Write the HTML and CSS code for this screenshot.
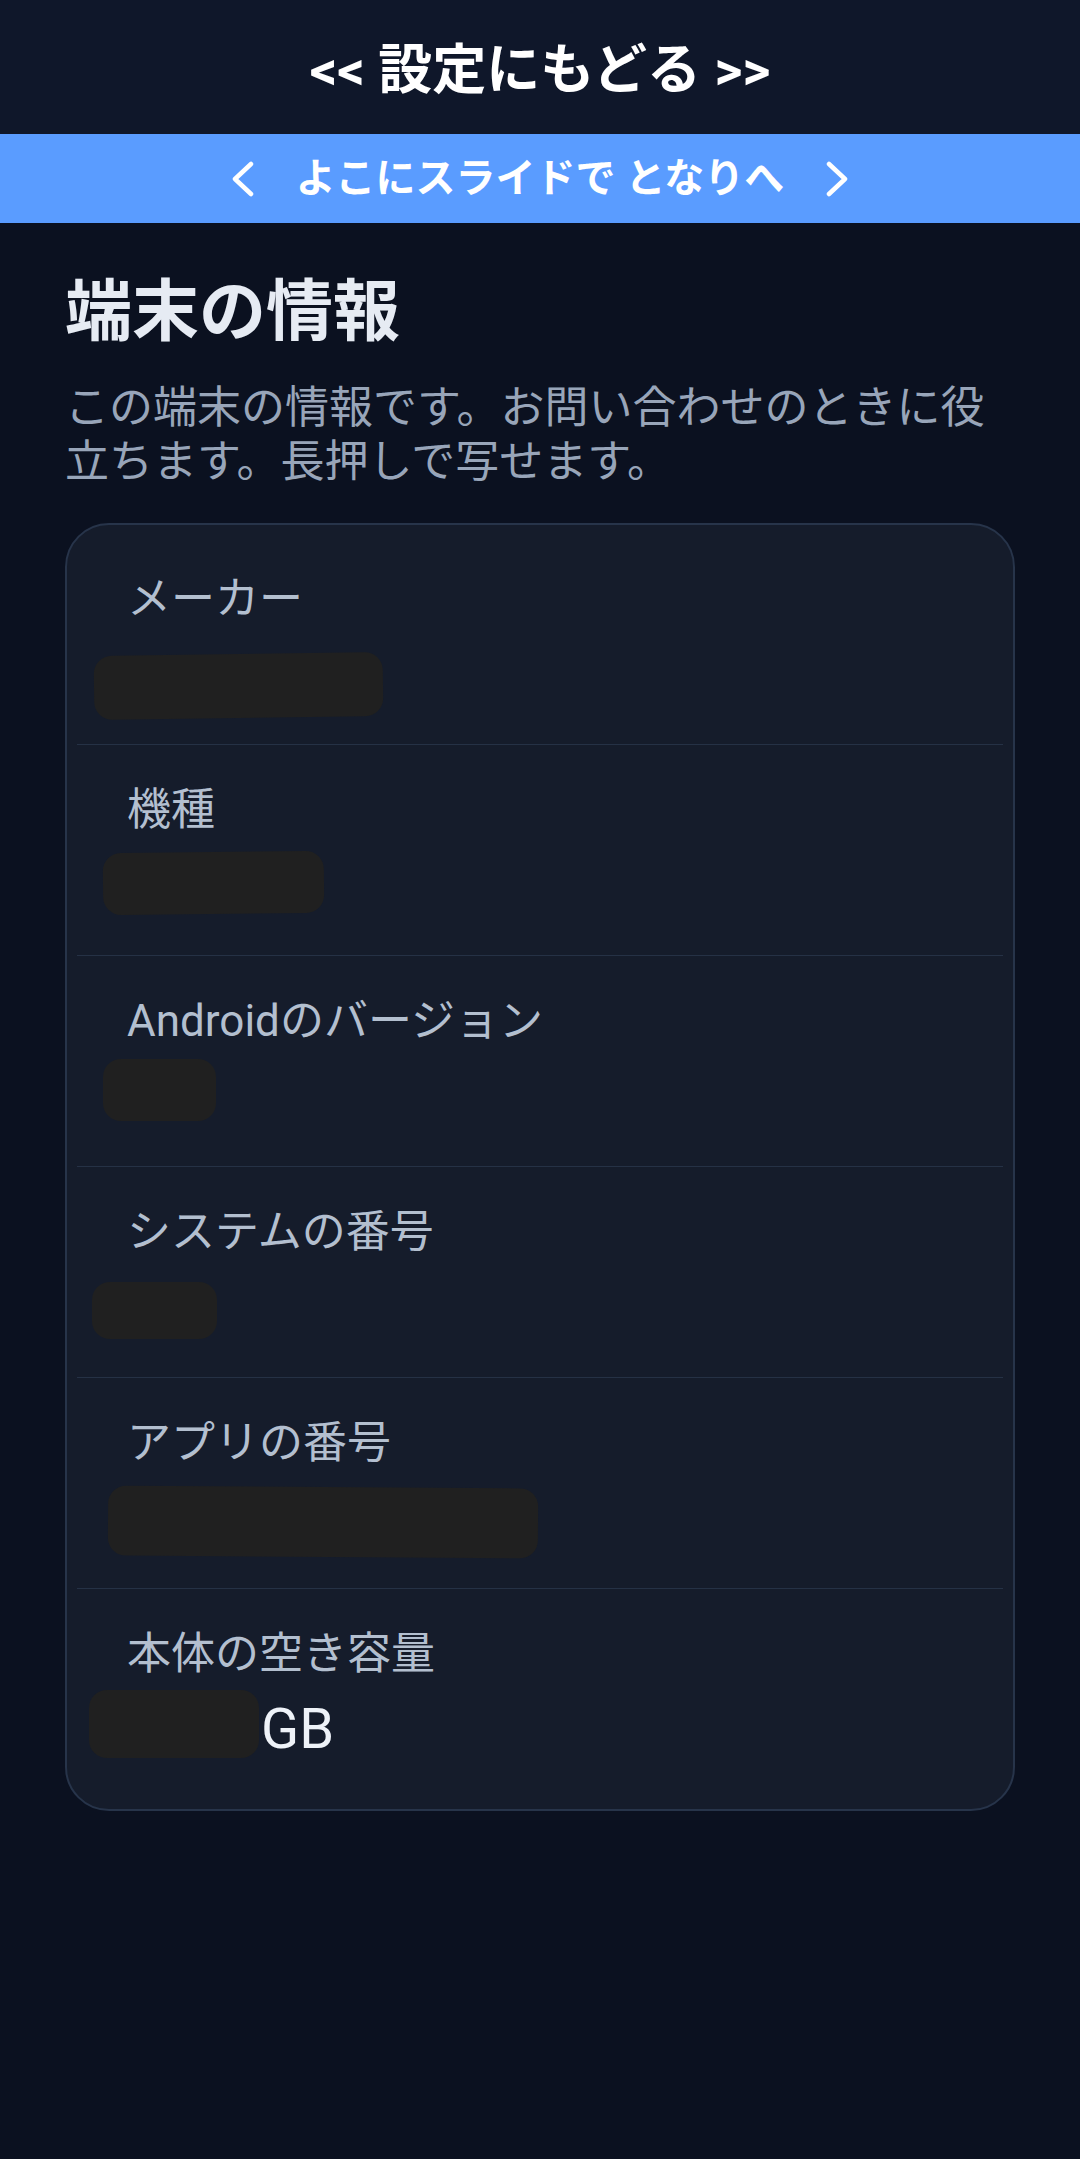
FILE: index.html
```html
<!DOCTYPE html>
<html lang="ja">
<head>
    <meta charset="UTF-8">
    <meta name="viewport" content="width=device-width, initial-scale=1.0">
    <title>端末の情報</title>

    <link rel="stylesheet" href="styles.css">

</head>
<body>

    <header class="topbar">
        <span class="backLink">&lt;&lt; 設定にもどる &gt;&gt;</span>
    </header>

    <div class="slideBar">
        <svg class="chev" width="24" height="36" viewBox="0 0 24 36"><polyline points="19,3 3,18 19,33"/></svg>
        <span class="slideText">よこにスライドで となりへ</span>
        <svg class="chev" width="24" height="36" viewBox="0 0 24 36"><polyline points="5,3 21,18 5,33"/></svg>
    </div>

    <main class="content">
        <h1 class="title">端末の情報</h1>
        <p class="lead">この端末の情報です。お問い合わせのときに役立ちます。長押しで写せます。</p>

        <ul class="infoList">
            <li class="infoRow">
                <span class="label">メーカー</span>
                <div class="value"><span class="mask mask-maker"></span></div>
            </li>
            <li class="infoRow">
                <span class="label">機種</span>
                <div class="value"><span class="mask mask-model"></span></div>
            </li>
            <li class="infoRow">
                <span class="label">Androidのバージョン</span>
                <div class="value"><span class="mask mask-android"></span></div>
            </li>
            <li class="infoRow">
                <span class="label">システムの番号</span>
                <div class="value"><span class="mask mask-build"></span></div>
            </li>
            <li class="infoRow">
                <span class="label">アプリの番号</span>
                <div class="value"><span class="mask mask-app"></span></div>
            </li>
            <li class="infoRow">
                <span class="label">本体の空き容量</span>
                <div class="value"><span class="mask mask-storage"></span><span class="unit">GB</span></div>
            </li>
        </ul>
    </main>

</body>
</html>
```

FILE: styles.css
```css
*{padding: 0px; margin: 0px; box-sizing: border-box;}
ul, li{list-style: none;}
html, body{background: #0b1120; min-height: 100%;}
body{font-family: Roboto, "Noto Sans CJK JP", sans-serif; color: #e2e8f0;}

/* top bar */
.topbar{height: 134px; padding-top: 8px; background: #0f172a; display: flex; align-items: center; justify-content: center;}
.backLink{font-size: 54px; font-weight: 700; color: #ffffff; line-height: 1;}

.slideBar{height: 89px; background: #5a9cff; display: flex; align-items: center; justify-content: center; gap: 40px;}
.slideText{font-size: 40px; font-weight: 700; color: #ffffff; line-height: 1;}
.chev{display: block;}
.chev polyline{fill: none; stroke: #ffffff; stroke-width: 4.5; stroke-linecap: round; stroke-linejoin: round;}

/* content */
.content{padding: 46px 65px 60px;}
.title{font-size: 67px; font-weight: 700; line-height: 86px; color: #e6ebf3;}
.lead{margin-top: 26px; font-size: 44px; line-height: 54px; color: #98a5b9;}

.infoList{margin-top: 34px; background: #151c2b; border: 2px solid #27344a; border-radius: 44px; padding: 9px 10px 10px;}
.infoRow{padding: 37px 50px 35px; border-bottom: 1px solid #253145;}
.infoRow:last-child{border-bottom: none;}
.infoRow .label{display: block; font-size: 44px; line-height: 56px; color: #b3bfcf;}
.infoRow .value{display: flex; align-items: center; height: 70px; margin-top: 12px;}
.unit{font-size: 56px; line-height: 70px; color: #eef2f8;}

/* redacted values */
.mask{display: block; background: #202020; border-radius: 18px;}
.mask-maker{width: 289px; height: 64px; margin-left: -33px; transform: translateY(12px) rotate(-0.8deg);}
.mask-model{width: 221px; height: 62px; margin-left: -24px; transform: translateY(-2px) rotate(-0.6deg);}
.mask-android{width: 113px; height: 62px; margin-left: -24px; transform: translateY(-6px);}
.mask-build{width: 125px; height: 57px; margin-left: -35px; transform: translateY(3px);}
.mask-app{width: 430px; height: 70px; margin-left: -19px; transform: translateY(4px) rotate(0.4deg);}
.mask-storage{width: 170px; height: 68px; margin-left: -38px; margin-right: 2px; transform: translateY(-5px);}
```
